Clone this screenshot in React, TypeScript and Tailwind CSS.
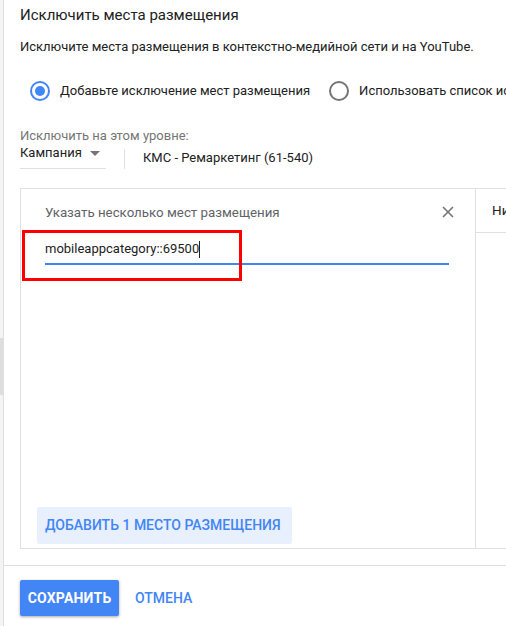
import React from "react";

export default function App() {
  return (
    <div className="w-[506px] h-[626px] overflow-hidden bg-white flex text-[#202124]" style={{ fontFamily: "Roboto, 'Liberation Sans', sans-serif" }}>
      {/* scrollbar strip */}
      <div className="w-[3px] shrink-0 bg-[#f4f4f4] flex flex-col">
        <div className="h-[338px]" />
        <div className="h-[57px] bg-[#dedede]" />
      </div>
      <div className="flex-1 min-w-0 border-l border-[#e0e0e0] flex flex-col">
        <div className="pl-[16px] flex flex-col">
          <div className="pt-[4px] h-[26px] text-[15px] leading-[22px] text-[#212121] whitespace-nowrap">Исключить места размещения</div>
          <div className="mt-[12px] h-[18px] text-[13px] leading-[18px] text-[#212121] whitespace-nowrap">Исключите места размещения в контекстно-медийной сети и на YouTube.</div>
          <div className="mt-[24px] h-[22px] flex items-center whitespace-nowrap text-[13px] text-[#212121]">
            <div className="ml-[10px] w-[20px] h-[20px] rounded-full border-2 border-[#4285f4] flex items-center justify-center shrink-0">
              <div className="w-[10px] h-[10px] rounded-full bg-[#4285f4]" />
            </div>
            <span className="ml-[10px]">Добавьте исключение мест размещения</span>
            <div className="ml-[19px] w-[20px] h-[20px] rounded-full border-2 border-[#757575] shrink-0" />
            <span className="ml-[10px]">Использовать список исключений</span>
          </div>
          <div className="mt-[26px] h-[16px] text-[13px] leading-[16px] text-[#757575] whitespace-nowrap">Исключить на этом уровне:</div>
          <div className="flex items-start h-[43px]">
            <div className="w-[86px] h-[25px] border-b border-[#e0e0e0] flex items-start text-[13px] leading-[18px] text-[#212121]">
              <span>Кампания</span>
              <svg className="ml-[8px] mt-[7px]" width="10" height="5" viewBox="0 0 10 5"><path d="M0 0 L10 0 L5 5 Z" fill="#757575" /></svg>
            </div>
            <div className="ml-[18px] mt-[5px] w-px h-[20px] bg-[#e0e0e0]" />
            <div className="ml-[18px] mt-[5px] text-[13px] leading-[18px] text-[#212121] whitespace-nowrap">КМС - Ремаркетинг (61-540)</div>
          </div>
          {/* panels */}
          <div className="relative mt-[1px] h-[361px] flex border-t border-b border-[#e0e0e0] w-[520px]">
            <div className="w-[456px] shrink-0 border-l border-r border-[#e0e0e0] flex flex-col">
              <div className="flex items-center h-[46px] pl-[24px] pr-[20px]">
                <span className="flex-1 text-[13.3px] text-[#5f6368] whitespace-nowrap pt-[1px]">Указать несколько мест размещения</span>
                <svg width="12" height="12" viewBox="0 0 12 12" className="mr-[1px]"><path d="M1 1 L11 11 M11 1 L1 11" stroke="#757575" strokeWidth="1.6" /></svg>
              </div>
              <div className="ml-[24px] w-[404px] h-[30px] border-b-2 border-[#4285f4] flex items-center text-[13px] text-[#212121] whitespace-nowrap">
                <span>mobileappcategory::69500</span>
                <span className="inline-block w-px h-[17px] bg-[#212121]" />
              </div>
              <div className="flex-1" />
              <div className="ml-[16px] mb-[4px] w-[255px] h-[37px] bg-[#e8f0fe] rounded-[2px] flex items-center pl-[8px] text-[14px] font-medium text-[#4285f4] whitespace-nowrap">ДОБАВИТЬ 1 МЕСТО РАЗМЕЩЕНИЯ</div>
            </div>
            <div className="flex-1 min-w-0 flex flex-col">
              <div className="h-[44px] border-b border-[#e0e0e0] pl-[16px] flex items-center text-[13.5px] text-[#212121] whitespace-nowrap overflow-hidden">Ничего не выбрано</div>
            </div>
            <div className="absolute left-[2px] top-[41px] w-[220px] h-[51px] border-[3px] border-[#ff0000]" />
          </div>
        </div>
        <div className="mt-[16px] border-t border-[#e0e0e0] pl-[16px] pt-[14px] flex items-center">
          <div className="w-[99px] h-[36px] bg-[#4285f4] rounded-[2px] shadow-[0_1px_3px_rgba(0,0,0,0.35)] flex items-center justify-center text-white text-[14px] font-bold tracking-[0.2px]">СОХРАНИТЬ</div>
          <div className="ml-[16px] text-[14px] font-medium text-[#4285f4]">ОТМЕНА</div>
        </div>
      </div>
    </div>
  );
}
